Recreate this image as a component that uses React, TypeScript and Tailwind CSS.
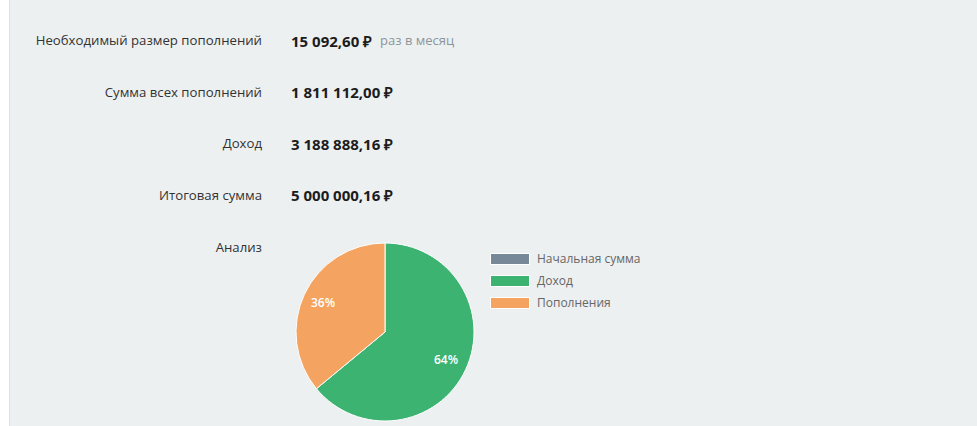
const rows = [
  { label: 'Необходимый размер пополнений', value: '15 092,60 ₽', note: 'раз в месяц' },
  { label: 'Сумма всех пополнений', value: '1 811 112,00 ₽' },
  { label: 'Доход', value: '3 188 888,16 ₽' },
  { label: 'Итоговая сумма', value: '5 000 000,16 ₽' },
];

const legend = [
  { name: 'Начальная сумма', color: 'bg-[#778899]' },
  { name: 'Доход', color: 'bg-[#3cb371]' },
  { name: 'Пополнения', color: 'bg-[#f4a460]' },
];

function Pie() {
  const cx = 94;
  const cy = 94;
  const r = 89;
  // orange slice goes counter-clockwise from the top, 36%
  const a = (0.64 * 2 * Math.PI);
  const x = cx + r * Math.sin(a);
  const y = cy - r * Math.cos(a);
  return (
    <svg width="188" height="188" viewBox="0 0 188 188">
      <path d={`M${cx} ${cy} L${cx} ${cy - r} A${r} ${r} 0 1 1 ${x} ${y} Z`} fill="#3cb371" stroke="#fff" strokeWidth="1" />
      <path d={`M${cx} ${cy} L${x} ${y} A${r} ${r} 0 0 1 ${cx} ${cy - r} Z`} fill="#f4a460" stroke="#fff" strokeWidth="1" />
      <text x="32" y="69" textAnchor="middle" fill="#fff" fontSize="12" fontWeight="600" fontFamily="'Open Sans', sans-serif">36%</text>
      <text x="155" y="126" textAnchor="middle" fill="#fff" fontSize="12" fontWeight="600" fontFamily="'Open Sans', sans-serif">64%</text>
    </svg>
  );
}

export default function App() {
  return (
    <div className="flex min-h-screen bg-white font-['Open_Sans',sans-serif]">
      <div className="w-[9px] shrink-0" />
      <div className="flex-1 border-l border-[#dde2e4] bg-[#edf0f1] pt-[31px]">
        <div className="flex flex-col gap-[31.5px]">
          {rows.map((row) => (
            <div key={row.label} className="flex items-center h-5">
              <div className="w-[252px] text-right text-[13.2px] text-[#333]">{row.label}</div>
              <div className="ml-[29px] text-[15px] font-bold text-[#1c1c1c]">{row.value}</div>
              {row.note && <div className="ml-[8px] text-[13px] text-[#8c959b]">{row.note}</div>}
            </div>
          ))}
          <div className="flex items-start">
            <div className="w-[252px] h-5 leading-5 text-right text-[13.2px] text-[#333]">Анализ</div>
            <div className="ml-[29px] mt-[1px] flex items-start">
              <Pie />
              <div className="ml-[11px] mt-[15px] flex flex-col gap-[10px]">
                {legend.map((item) => (
                  <div key={item.name} className="flex items-center h-[12px]">
                    <span className={`w-[40px] h-[12px] border border-white ${item.color}`} />
                    <span className="ml-[7px] text-[12px] text-[#666]">{item.name}</span>
                  </div>
                ))}
              </div>
            </div>
          </div>
        </div>
      </div>
    </div>
  );
}
